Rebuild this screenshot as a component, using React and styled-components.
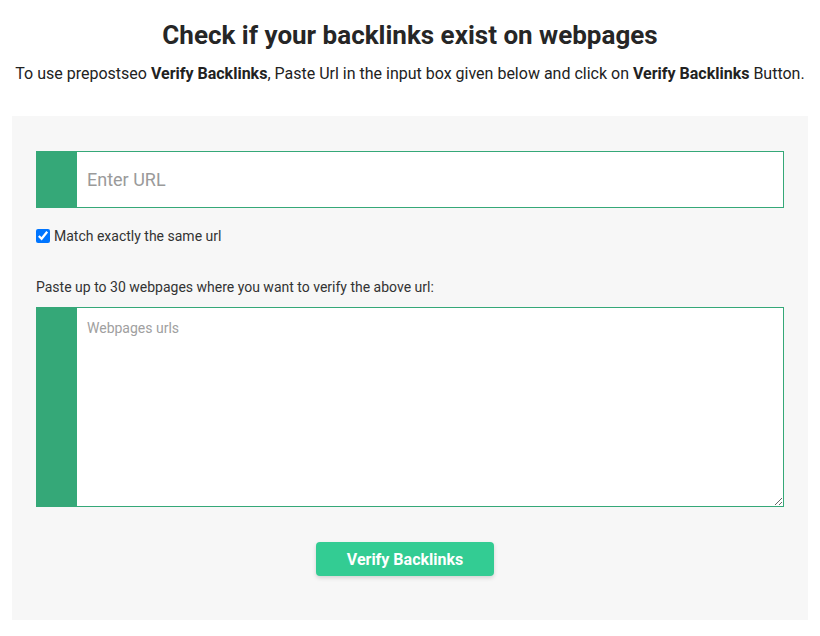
import React from "react";
import styled, { createGlobalStyle } from "styled-components";

const GlobalStyle = createGlobalStyle`
  body {
    margin: 0;
    background: #fff;
    font-family: Roboto, "Liberation Sans", sans-serif;
    color: #222;
  }
`;

const Page = styled.div`
  padding: 0 12px;
`;

const Header = styled.header`
  text-align: center;
  padding-top: 18px;

  h1 {
    margin: 0;
    font-size: 26px;
    font-weight: 700;
    color: #262626;
    line-height: 34px;
  }

  p {
    margin: 10px 0 0;
    font-size: 16px;
    color: #222;
    line-height: 24px;
    white-space: nowrap;
  }
`;

const Panel = styled.section`
  margin-top: 30px;
  background: #f7f7f7;
  padding: 35px 24px 44px;
  height: 504px;
  box-sizing: border-box;
`;

const Field = styled.div`
  display: flex;
  border: 1px solid #35a878;
  background: #fff;
  height: ${(p) => p.$height}px;
  box-sizing: border-box;
`;

const Bar = styled.div`
  width: 40px;
  flex: none;
  background: #35a878;
`;

const Input = styled.input`
  flex: 1;
  border: none;
  outline: none;
  padding: 0 10px;
  font: 18px Roboto, "Liberation Sans", sans-serif;
  color: #333;
  background: transparent;

  &::placeholder {
    color: #9a9a9a;
  }
`;

const TextArea = styled.textarea`
  flex: 1;
  border: none;
  outline: none;
  padding: 12px 10px;
  font: 14px Roboto, "Liberation Sans", sans-serif;
  color: #333;
  background: transparent;
  resize: both;

  &::placeholder {
    color: #a0a0a0;
  }
`;

const CheckRow = styled.label`
  display: flex;
  align-items: center;
  gap: 4px;
  margin-top: 20px;
  font-size: 14px;
  color: #333;

  input {
    margin: 0;
    width: 14px;
    height: 14px;
  }
`;

const Hint = styled.p`
  margin: 35px 0 12px;
  font-size: 14px;
  color: #333;
`;

const Actions = styled.div`
  display: flex;
  justify-content: center;
  margin-top: 35px;
  padding-right: 10px;
`;

const Button = styled.button`
  width: 178px;
  height: 34px;
  border: none;
  border-radius: 4px;
  background: #33cc93;
  color: #fff;
  font: 700 16px Roboto, "Liberation Sans", sans-serif;
  box-shadow: 0 2px 4px rgba(0, 0, 0, 0.15);
  cursor: pointer;
`;

export default function App() {
  return (
    <Page>
      <GlobalStyle />
      <Header>
        <h1>Check if your backlinks exist on webpages</h1>
        <p>
          To use prepostseo <b>Verify Backlinks</b>, Paste Url in the input box
          given below and click on <b>Verify Backlinks</b> Button.
        </p>
      </Header>
      <Panel>
        <Field $height={57}>
          <Bar />
          <Input placeholder="Enter URL" />
        </Field>
        <CheckRow>
          <input type="checkbox" defaultChecked />
          Match exactly the same url
        </CheckRow>
        <Hint>Paste up to 30 webpages where you want to verify the above url:</Hint>
        <Field $height={200}>
          <Bar />
          <TextArea placeholder="Webpages urls" />
        </Field>
        <Actions>
          <Button>Verify Backlinks</Button>
        </Actions>
      </Panel>
    </Page>
  );
}
